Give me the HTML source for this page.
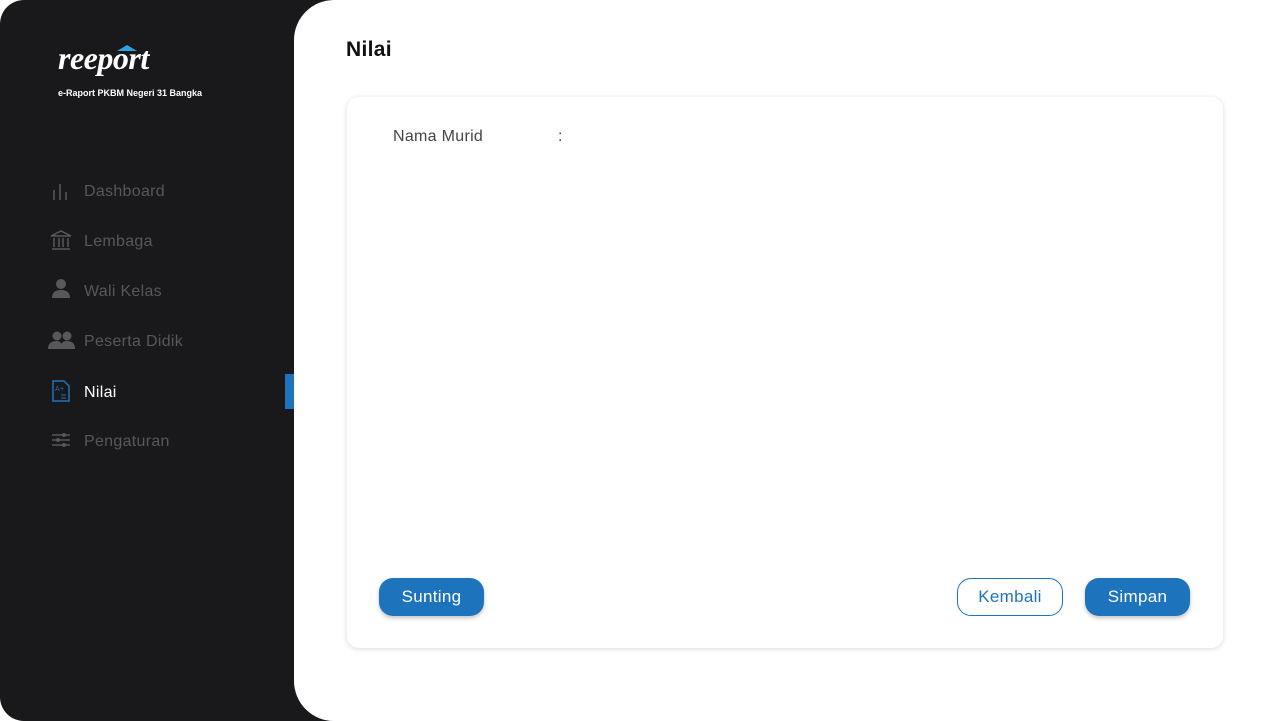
<!DOCTYPE html>
<html><head><style>
*{margin:0;padding:0;box-sizing:border-box}
body{width:1280px;height:721px;background:#fff;font-family:"Liberation Sans",sans-serif;position:relative;overflow:hidden;letter-spacing:0.3px}
.side{position:absolute;left:0;top:0;width:340px;height:721px;background:#19181a;border-radius:24px 0 0 24px}
.main{position:absolute;left:294px;top:0;width:986px;height:721px;background:#fff;border-radius:40px 0 0 40px}
.logo{position:absolute;left:58px;top:40px;color:#fff;font-family:"Liberation Serif",serif;font-style:italic;font-weight:bold;font-size:32px;letter-spacing:-0.5px}
.sub{position:absolute;left:58px;top:88px;color:#fff;font-size:9px;font-weight:bold;letter-spacing:0}
.item{position:absolute;left:84px;color:#58575a;font-size:16px}
.ic{position:absolute;left:50px}
.card{position:absolute;left:347px;top:97px;width:876px;height:551px;border-radius:12px;box-shadow:0 1px 6px rgba(0,0,0,.15);background:#fff}
.btn{position:absolute;top:578px;height:38px;border-radius:14px;font-size:17px;text-align:center;line-height:38px}
.f{background:#1d74bd;color:#fff;box-shadow:0 2px 4px rgba(0,0,0,.25)}
</style></head><body>
<div class="side"></div>
<div class="logo">reeport</div>
<svg style="position:absolute;left:116px;top:44px" width="22" height="8"><path d="M1 7 L11 1 L21 7 Z" fill="#2aa5e0"/></svg>
<div class="sub">e-Raport PKBM Negeri 31 Bangka</div>
<svg class="ic" style="top:182px" width="20" height="18"><g stroke="#58575a" stroke-width="1.5"><path d="M4 8v10M10 2v16M16 10v8"/></g></svg>
<div class="item" style="top:183px">Dashboard</div>
<svg class="ic" style="top:230px" width="22" height="20"><g fill="none" stroke="#58575a" stroke-width="1.5"><path d="M1 6L11 1L21 6Z M2 19h18 M4 8v9 M9 8v9 M13 8v9 M18 8v9"/></g></svg>
<div class="item" style="top:233px">Lembaga</div>
<svg class="ic" style="top:278px" width="22" height="22"><circle cx="11" cy="6" r="5" fill="#58575a"/><path d="M2 20 Q2 12 11 12 Q20 12 20 20Z" fill="#58575a"/></svg>
<div class="item" style="top:283px">Wali Kelas</div>
<svg class="ic" style="top:330px;left:48px" width="28" height="20"><circle cx="9" cy="6" r="4.5" fill="#58575a"/><circle cx="19" cy="6" r="4.5" fill="#58575a"/><path d="M0 19Q0 11 9 11Q14 11 14 19Z M12 19Q12 11 19 11Q27 11 27 19Z" fill="#58575a"/></svg>
<div class="item" style="top:333px">Peserta Didik</div>
<svg class="ic" style="top:380px;left:52px" width="18" height="22"><path d="M1 1h11l5 5v15H1Z" fill="none" stroke="#1d74bd" stroke-width="1.5"/><text x="3" y="11" font-size="7" fill="#1d74bd" font-family="Liberation Sans">A+</text><path d="M9 15h5M9 18h5" stroke="#1d74bd"/></svg>
<div class="item" style="top:384px;color:#fff">Nilai</div>
<div style="position:absolute;left:285px;top:374px;width:9px;height:35px;background:#1d74bd"></div>
<svg class="ic" style="top:432px;left:51px" width="20" height="16"><g stroke="#58575a" stroke-width="1.5"><path d="M1 3h18M1 8h18M1 13h18"/></g><circle cx="13" cy="3" r="2" fill="#58575a"/><circle cx="7" cy="8" r="2" fill="#58575a"/><circle cx="13" cy="13" r="2" fill="#58575a"/></svg>
<div class="item" style="top:433px">Pengaturan</div>
<div class="main"></div>
<div style="position:absolute;left:346px;top:38px;font-size:21px;font-weight:bold;color:#111">Nilai</div>
<div class="card"></div>
<div style="position:absolute;left:393px;top:128px;font-size:16px;color:#444">Nama Murid</div>
<div style="position:absolute;left:558px;top:128px;font-size:16px;color:#444">:</div>
<div class="btn f" style="left:379px;width:105px">Sunting</div>
<div class="btn" style="left:957px;width:106px;border:1.5px solid #1d74bd;color:#1d74bd;line-height:35px">Kembali</div>
<div class="btn f" style="left:1085px;width:105px">Simpan</div>
</body></html>
